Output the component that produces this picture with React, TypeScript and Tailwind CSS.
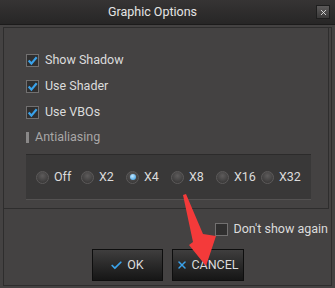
import { Check, X } from "lucide-react";

const font = { fontFamily: "Roboto, 'Liberation Sans', sans-serif" };

function CheckRow({ label, checked }: { label: string; checked: boolean }) {
  return (
    <div className="flex items-center h-[12px] gap-[6px]">
      <div className="w-[13px] h-[13px] shrink-0 border border-[#727070] bg-[#302f2f] flex items-center justify-center">
        {checked && (
          <svg width="11" height="11" viewBox="0 0 10 10">
            <path d="M1.5 5 L4 7.8 L8.8 2" stroke="#3aa2ea" strokeWidth="2" fill="none" />
          </svg>
        )}
      </div>
      <span className="text-[12.5px] text-[#dcdcdc] leading-none">{label}</span>
    </div>
  );
}

function Radio({ label, on }: { label: string; on?: boolean }) {
  return (
    <div className="flex items-center gap-[5px] w-[45px] shrink-0">
      <div className="w-[13px] h-[13px] shrink-0 rounded-full border border-[#5c5a5a] bg-[radial-gradient(circle_at_50%_35%,#5e5c5c,#2f2e2e)] flex items-center justify-center">
        {on && <div className="w-[6px] h-[6px] rounded-full bg-[radial-gradient(circle_at_40%_35%,#c4e8ff,#2a95e0)]" />}
      </div>
      <span className="text-[12.5px] text-[#dcdcdc] leading-none">{label}</span>
    </div>
  );
}

export default function App() {
  return (
    <div className="w-[335px] h-[288px] bg-[#444242] flex flex-col relative overflow-hidden" style={font}>
      <div className="h-[25px] bg-gradient-to-b from-[#363434] to-[#272626] border-b border-[#1c1b1b] flex items-center justify-center pr-[30px] relative">
        <span className="text-[12.5px] text-[#e4e4e4]">Graphic Options</span>
        <div className="absolute right-[5px] top-[5px] w-[14px] h-[14px] border border-[#1e1e1e] bg-gradient-to-b from-[#5c5a5a] to-[#3a3939] flex items-center justify-center">
          <X size={9} color="#e8e8e8" strokeWidth={2.2} />
        </div>
      </div>
      <div className="flex-1 mx-[3px] mt-[2px] mb-[2px] border border-[#2e2d2d] flex flex-col">
        <div className="h-[181px] shrink-0 border-b border-r border-[#2e2d2d] mr-[2px] flex flex-col pl-[22px] pt-[26px]">
          <div className="flex flex-col gap-[14px]">
            <CheckRow label="Show Shadow" checked />
            <CheckRow label="Use Shader" checked />
            <CheckRow label="Use VBOs" checked />
          </div>
          <div className="flex items-center gap-[6px] mt-[13px] h-[12px]">
            <div className="w-[3px] h-[11px] bg-[#8a8888]" />
            <span className="text-[12.5px] text-[#a9a7a7] leading-none">Antialiasing</span>
          </div>
          <div className="mt-[11px] w-[285px] h-[46px] bg-[#393838] border-t border-[#2c2b2b] border-b border-b-[#545252] flex items-center pl-[10px]">
            <Radio label="Off" />
            <Radio label="X2" />
            <Radio label="X4" on />
            <Radio label="X8" />
            <Radio label="X16" />
            <Radio label="X32" />
          </div>
        </div>
        <div className="flex justify-end pr-[3px] pt-[14px]">
          <CheckRow label="Don't show again" checked={false} />
        </div>
        <div className="flex justify-center gap-[9px] mt-[14px]">
          <button className="w-[71px] h-[32px] border border-[#0e0e0e] bg-gradient-to-b from-[#3f3e3e] to-[#161616] flex items-center justify-center gap-[4px] text-[12.5px] text-[#dcdcdc]">
            <Check size={13} color="#3aa2ea" strokeWidth={3.2} />
            OK
          </button>
          <button className="w-[72px] h-[32px] border border-[#0e0e0e] bg-gradient-to-b from-[#3f3e3e] to-[#161616] flex items-center justify-center gap-[3px] text-[12.5px] text-[#dcdcdc]">
            <X size={12} color="#3aa2ea" strokeWidth={3} />
            CANCEL
          </button>
        </div>
      </div>
      <svg className="absolute left-0 top-0 pointer-events-none" width="335" height="288">
        <polygon points="183,195 186,194 203,234 216,236 206,266 189,245 193,242" fill="#f43a3a" />
      </svg>
    </div>
  );
}
